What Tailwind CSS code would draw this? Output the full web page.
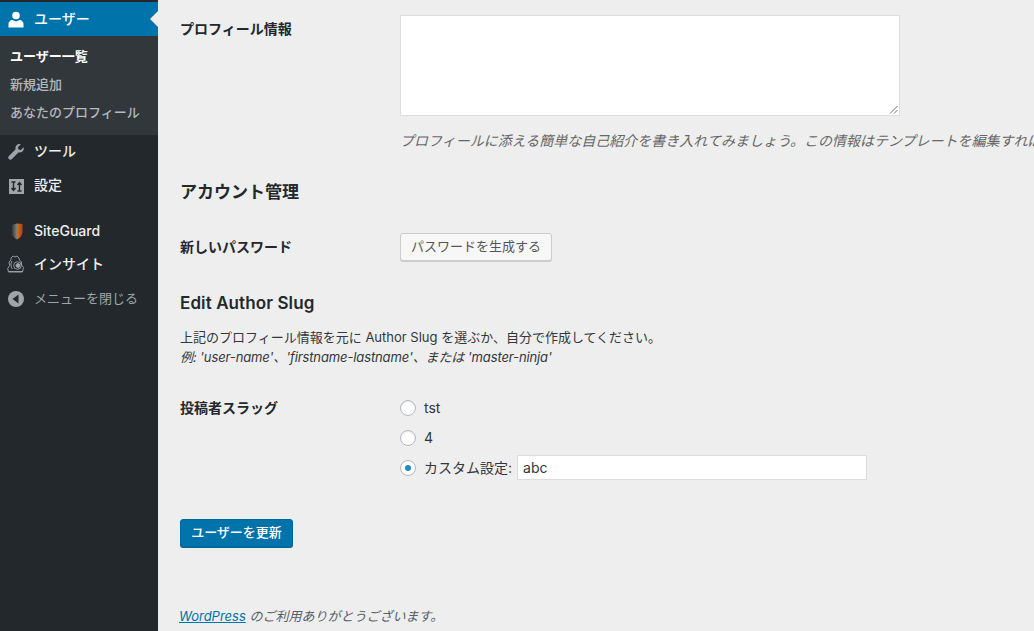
<!DOCTYPE html>
<html lang="ja">
<head>
<meta charset="utf-8">
<script src="https://cdn.jsdelivr.net/npm/@tailwindcss/browser@4"></script>
</head>
<body class="m-0 h-[631px] w-[1034px] overflow-hidden bg-[#eeeeee] font-['Inter','Noto_Sans_CJK_JP',sans-serif] text-[13px] text-[#32373c]">
<div class="flex h-[631px] w-[1034px]">
  <aside class="flex h-full w-[158px] shrink-0 flex-col bg-[#23282d] pt-[2px] text-[14px] font-medium text-[#eeeeee]">
    <div class="relative flex h-[34px] items-center bg-[#0073aa] text-white">
      <svg class="absolute left-[8px] top-[9px] h-[18px] w-[18px]" viewBox="0 0 18 18" fill="#fff"><circle cx="8" cy="4.500" r="3.800"/><path d="M0.500 16.500v-3.500c0-2.500 2.500-4 4-4l3.500 1.500L11.500 9c1.500 0 4 1.500 4 4v3.500z"/></svg>
      <span class="mb-[2px] ml-[34px]">ユーザー</span>
      <span class="absolute right-0 top-[9px] h-0 w-0 border-y-[8px] border-r-[8px] border-y-transparent border-r-[#eeeeee]"></span>
    </div>
    <div class="flex h-[99px] flex-col bg-[#32373c] pt-[7px] text-[13px]">
      <div class="flex h-[28px] items-center pl-[10px] font-bold text-white">ユーザー一覧</div>
      <div class="flex h-[28px] items-center pl-[10px] text-[#b4b9be]">新規追加</div>
      <div class="flex h-[28px] items-center pl-[10px] text-[#b4b9be]">あなたのプロフィール</div>
    </div>
    <div class="relative flex h-[34px] items-center">
      <svg class="absolute left-[7px] top-[8px] h-[18px] w-[18px]" viewBox="0 0 18 18" fill="#9ea3a8"><path d="M16.700 4.200l-2.900 2.900-2.300-.6-.6-2.300 2.900-2.900C12.800 1 11.600 1 10.600 1.500 9 2.300 8 4.300 8.600 6.200L1.900 12.900c-.9.900-.9 2.200 0 3.100s2.200.9 3.100 0l6.700-6.700c1.900.6 3.900-.4 4.700-2 .5-1 .5-2.200.3-3.100z"/></svg>
      <span class="mb-[4px] ml-[34px]">ツール</span>
    </div>
    <div class="relative flex h-[34px] items-center">
      <svg class="absolute left-[9px] top-[10px] h-[15px] w-[15px]" viewBox="0 0 15 15"><rect width="15" height="15" fill="#a0a5aa"/><path d="M4.500 2.500v9M2.500 9l2 2.500 2-2.500M10.500 12.500v-9M8.500 6l2-2.500 2 2.500M2.500 3h4M8.500 12h4" stroke="#23282d" stroke-width="1.400" fill="none"/></svg>
      <span class="mb-[4px] ml-[34px]">設定</span>
    </div>
    <div class="relative mt-[11px] flex h-[34px] items-center">
      <svg class="absolute left-[11px] top-[9px] h-[17px] w-[12px]" viewBox="0 0 12 17"><defs><linearGradient id="sg" x1="0" y1="0" x2="1" y2="0"><stop offset="0" stop-color="#2f2f2f"/><stop offset="0.450" stop-color="#7a7a78"/><stop offset="0.550" stop-color="#d9641c"/><stop offset="1" stop-color="#a8431a"/></linearGradient></defs><path d="M0.500 2L6 0.500 11.500 1v7.500c0 3.500-2 6.500-5.500 8C3 15 .5 12 .5 8.500z" fill="url(#sg)"/></svg>
      <span class="mb-[2px] ml-[34px]">SiteGuard</span>
    </div>
    <div class="relative flex h-[34px] items-center">
      <svg class="absolute left-[7px] top-[7px] h-[18px] w-[18px]" viewBox="0 0 18 18" fill="none" stroke="#a0a5aa" stroke-width="0.900"><path d="M4 3L6 1l2 1 2-1 2 2 .5 2 2 2v3l2 2.500-1 4.500H1.500L.7 13.500l2-3L2 7l2-2z"/><circle cx="10.500" cy="10.500" r="3.800"/><circle cx="11" cy="10.500" r="2" fill="#a0a5aa"/><path d="M5 6c-1.500 2.500-1.500 6 .5 8M2 16.500h14"/></svg>
      <span class="mb-[4px] ml-[34px]">インサイト</span>
    </div>
    <div class="relative flex h-[34px] items-center text-[13px] font-normal text-[#a0a5aa]">
      <svg class="absolute left-[8px] top-[9px] h-[16px] w-[16px]" viewBox="0 0 16 16"><circle cx="8" cy="8" r="8" fill="#a0a5aa"/><path d="M10.500 3.500v9L4.500 8z" fill="#23282d"/></svg>
      <span class="ml-[34px]">メニューを閉じる</span>
    </div>
  </aside>
  <main class="relative min-w-0 flex-1 overflow-hidden pl-[22px]">
    <div class="flex pt-[15px]">
      <div class="w-[220px] shrink-0 pt-[4px] text-[14px] font-semibold leading-[20px] text-[#23282d]">プロフィール情報</div>
      <div class="min-w-0 flex-1">
        <div class="relative h-[101px] w-[500px] border border-[#dddddd] bg-white">
          <svg class="absolute bottom-[1px] right-[1px] h-[9px] w-[9px]" viewBox="0 0 9 9" stroke="#777" fill="none"><path d="M1 8.500L8.500 1M5 8.500L8.500 5"/></svg>
        </div>
        <p class="mt-[15px] whitespace-nowrap text-[14px] italic leading-[20px] text-[#666666]">プロフィールに添える簡単な自己紹介を書き入れてみましょう。この情報はテンプレートを編集すれば表示できます。</p>
      </div>
    </div>
    <h2 class="mt-[31px] text-[17px] font-semibold leading-[20px] text-[#23282d]">アカウント管理</h2>
    <div class="mt-[31px] flex items-center">
      <div class="mb-[2px] w-[220px] shrink-0 text-[14px] font-semibold text-[#23282d]">新しいパスワード</div>
      <div class="flex h-[28px] w-[152px] items-center justify-center rounded-[3px] border border-[#cccccc] bg-[#f7f7f7] text-[#555555] shadow-[0_1px_0_#cccccc]">パスワードを生成する</div>
    </div>
    <h2 class="mt-[32px] text-[17px] font-semibold leading-[20px] tracking-[0.1px] text-[#23282d]">Edit Author Slug</h2>
    <p class="mt-[15px] text-[13px] leading-[19px]"><span class="block h-[19px]">上記のプロフィール情報を元に Author Slug を選ぶか、自分で作成してください。</span><span class="mt-[1px] block h-[19px] italic tracking-[-0.12px]">例: 'user-name'、'firstname-lastname'、または 'master-ninja'</span></p>
    <div class="mt-[28px] flex">
      <div class="w-[220px] shrink-0 pt-[3px] text-[14px] font-semibold leading-[20px] text-[#23282d]">投稿者スラッグ</div>
      <div class="flex flex-col gap-[5px] text-[14px]">
        <div class="flex h-[25px] items-center gap-[8px]"><span class="box-border h-[16px] w-[16px] rounded-full border border-[#b4b9be] bg-white shadow-[inset_0_1px_2px_rgba(0,0,0,0.1)]"></span><span>tst</span></div>
        <div class="flex h-[25px] items-center gap-[8px]"><span class="box-border h-[16px] w-[16px] rounded-full border border-[#b4b9be] bg-white shadow-[inset_0_1px_2px_rgba(0,0,0,0.1)]"></span><span>4</span></div>
        <div class="flex h-[25px] items-center gap-[8px]">
          <span class="box-border flex h-[16px] w-[16px] items-center justify-center rounded-full border border-[#b4b9be] bg-white"><span class="h-[6px] w-[6px] rounded-full bg-[#1e8cbe]"></span></span>
          <span>カスタム設定:</span>
          <div class="-ml-[3px] flex h-[25px] w-[350px] items-center border border-[#dddddd] bg-white pl-[5px]">abc</div>
        </div>
      </div>
    </div>
    <div class="mt-[39px] flex h-[28px] w-[113px] items-center justify-center rounded-[3px] border border-[#006799] bg-[#0073aa] font-medium text-white shadow-[0_1px_0_#006799]">ユーザーを更新</div>
    <p class="-ml-px mt-[59px] whitespace-nowrap text-[13px] italic leading-[20px] text-[#555d66]"><span class="text-[#0073aa] underline">WordPress</span> のご利用ありがとうございます。</p>
  </main>
</div>
</body>
</html>
